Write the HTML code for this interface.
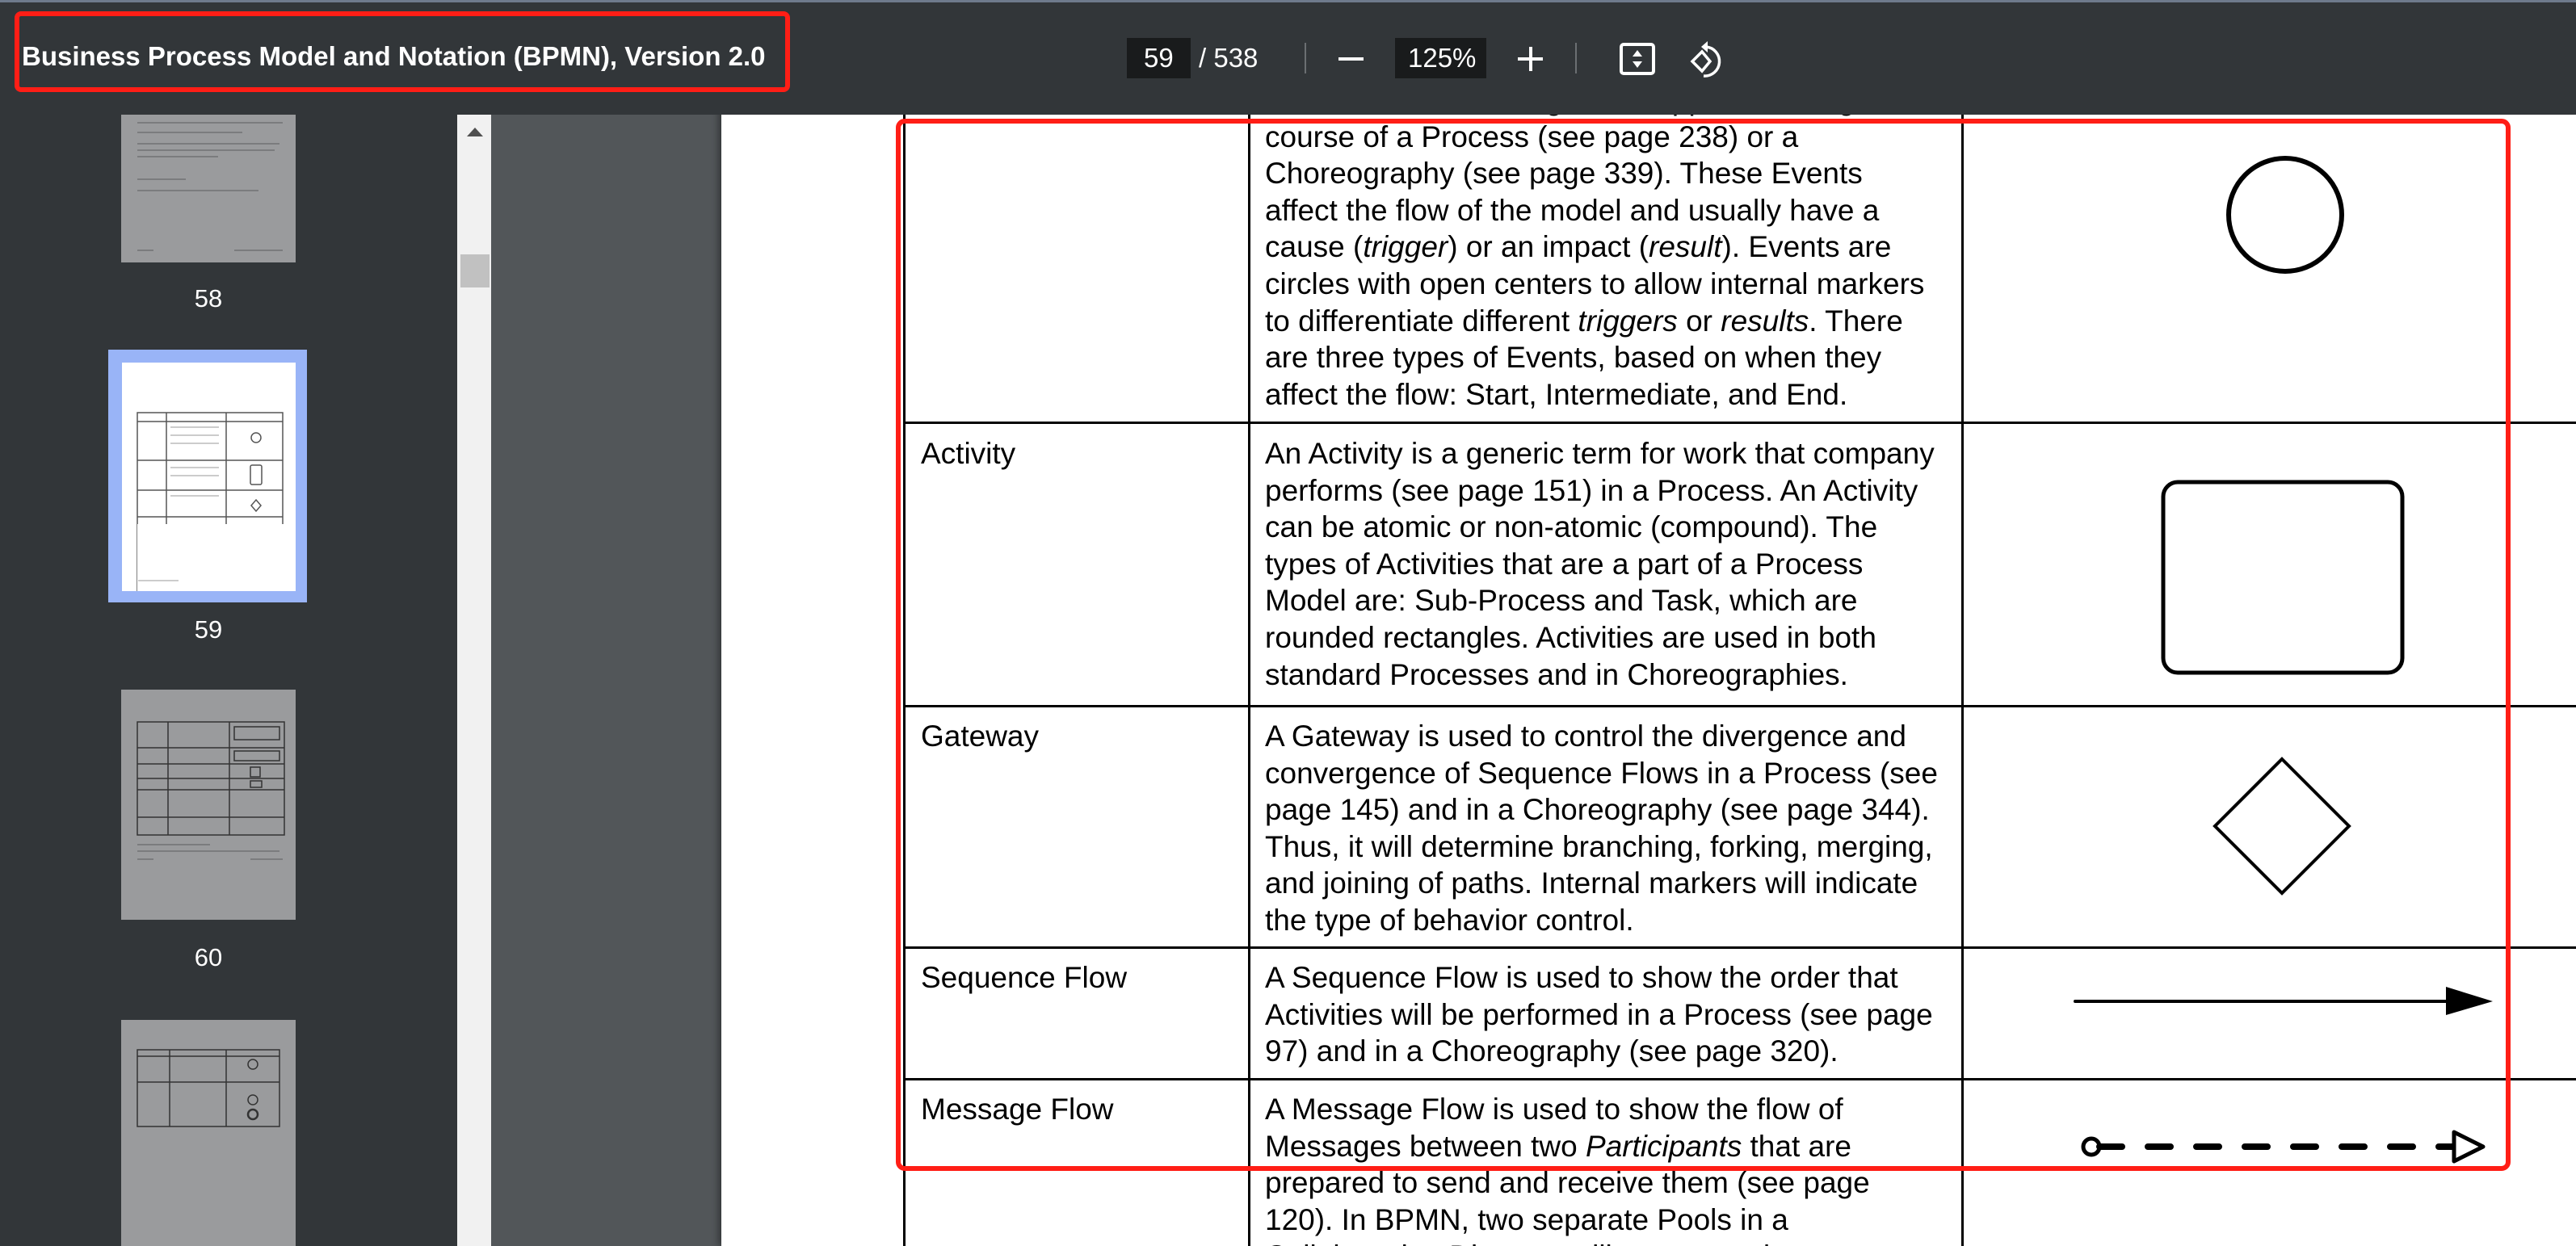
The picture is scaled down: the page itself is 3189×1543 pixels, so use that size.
<!DOCTYPE html>
<html style="overflow:hidden;width:3189px;height:1543px"><head><meta charset="utf-8"><style>
*{margin:0;padding:0;box-sizing:border-box}
body{width:3189px;height:1543px;overflow:hidden;background:#525659;font-family:"Liberation Sans",Arial,sans-serif}
#wrap{position:relative;width:3189px;height:1543px;overflow:hidden}
.abs{position:absolute}
#tb{left:0;top:0;width:3189px;height:142px;background:#323639;z-index:10;border-top:3px solid #6e7a8c}
#tb .t{color:#fff;font-size:32px;white-space:nowrap}
#side{left:0;top:142px;width:566px;height:1401px;background:#323639}
.lbl{color:#fff;font-size:31px;width:216px;text-align:center;left:150px}
#page{left:893px;top:0;width:2296px;height:1543px;background:#fff;box-shadow:-4px 0 8px rgba(0,0,0,.35)}
.txt{font-size:37px;line-height:45.6px;color:#000;white-space:nowrap}
.hl{background:#000;height:3px;left:1119px;width:2070px}
.vl{background:#000;width:3px;top:0;height:1543px}
</style></head><body><div id="wrap">
<div id="side" class="abs"></div>
<div class="abs" style="left:150px;top:142px;width:216px;height:183px;background:#9a9b9d">
<svg width="216" height="183"><g stroke="#7b7c7e" stroke-width="2"><line x1="20" y1="10" x2="200" y2="10"/><line x1="20" y1="22" x2="150" y2="22"/><line x1="20" y1="36" x2="196" y2="36"/><line x1="20" y1="44" x2="190" y2="44"/><line x1="20" y1="52" x2="120" y2="52"/><line x1="20" y1="80" x2="80" y2="80"/><line x1="20" y1="94" x2="170" y2="94"/><line x1="20" y1="168" x2="40" y2="168"/><line x1="140" y1="168" x2="200" y2="168"/></g></svg></div>
<div class="abs lbl" style="top:352px">58</div>
<div class="abs" style="left:134px;top:433px;width:246px;height:313px;background:#99b4f7"></div>
<div class="abs" style="left:151px;top:449px;width:215px;height:283px;background:#fff">
<svg width="215" height="283"><g fill="none" stroke="#555" stroke-width="1.5"><rect x="19" y="62" width="180" height="273" /><line x1="55" y1="62" x2="55" y2="200"/><line x1="129" y1="62" x2="129" y2="200"/><line x1="19" y1="73" x2="199" y2="73"/><line x1="19" y1="121" x2="199" y2="121"/><line x1="19" y1="158" x2="199" y2="158"/><line x1="19" y1="191" x2="199" y2="191"/><circle cx="166" cy="93" r="6"/><rect x="159" y="127" width="14" height="24" rx="2"/><path d="M166 170l6 7-6 7-6-7z"/><line x1="145" y1="203" x2="185" y2="203"/></g><rect x="19" y="200" width="181" height="84" fill="#fff"/><g stroke="#bbb" stroke-width="1.5"><line x1="60" y1="80" x2="120" y2="80"/><line x1="60" y1="90" x2="120" y2="90"/><line x1="60" y1="100" x2="120" y2="100"/><line x1="60" y1="130" x2="120" y2="130"/><line x1="60" y1="140" x2="120" y2="140"/><line x1="60" y1="165" x2="120" y2="165"/><line x1="20" y1="270" x2="70" y2="270"/></g></svg></div>
<div class="abs lbl" style="top:762px">59</div>
<div class="abs" style="left:150px;top:854px;width:216px;height:285px;background:#9a9b9d">
<svg width="216" height="285"><g fill="none" stroke="#333" stroke-width="1.5"><rect x="20" y="40" width="182" height="140"/><line x1="58" y1="40" x2="58" y2="180"/><line x1="134" y1="40" x2="134" y2="180"/><line x1="20" y1="72" x2="202" y2="72"/><line x1="20" y1="92" x2="202" y2="92"/><line x1="20" y1="110" x2="202" y2="110"/><line x1="20" y1="124" x2="202" y2="124"/><line x1="20" y1="158" x2="202" y2="158"/><rect x="140" y="46" width="56" height="16"/><rect x="140" y="76" width="56" height="12"/><rect x="160" y="96" width="12" height="12"/><rect x="160" y="113" width="14" height="8"/></g><g stroke="#7b7c7e" stroke-width="2"><line x1="20" y1="192" x2="110" y2="192"/><line x1="20" y1="200" x2="196" y2="200"/><line x1="20" y1="210" x2="40" y2="210"/><line x1="160" y1="210" x2="200" y2="210"/></g></svg></div>
<div class="abs lbl" style="top:1168px">60</div>
<div class="abs" style="left:150px;top:1263px;width:216px;height:280px;background:#9a9b9d">
<svg width="216" height="280"><g fill="none" stroke="#333" stroke-width="1.5"><rect x="20" y="37" width="176" height="95"/><line x1="60" y1="37" x2="60" y2="132"/><line x1="130" y1="37" x2="130" y2="132"/><line x1="20" y1="45" x2="196" y2="45"/><line x1="20" y1="77" x2="196" y2="77"/><circle cx="163" cy="55" r="6"/><circle cx="163" cy="99" r="6"/><circle cx="163" cy="117" r="6" stroke-width="2.5"/></g></svg></div>
<div class="abs" style="left:566px;top:142px;width:42px;height:1401px;background:#f1f1f1"></div>
<div class="abs" style="left:570px;top:315px;width:36px;height:41px;background:#c1c1c1"></div>
<svg class="abs" style="left:574px;top:155px" width="28" height="16"><path d="M4 14L14 3L24 14Z" fill="#505050"/></svg>
<div id="page" class="abs"></div>
<div class="abs vl" style="left:1118px"></div>
<div class="abs vl" style="left:1545px"></div>
<div class="abs vl" style="left:2428px"></div>
<div class="abs hl" style="top:522px"></div>
<div class="abs hl" style="top:873px"></div>
<div class="abs hl" style="top:1172px"></div>
<div class="abs hl" style="top:1335px"></div>
<div class="abs txt" style="left:1566px;top:101px">An Event is something that “happens” during the<br>course of a Process (see page 238) or a<br>Choreography (see page 339). These Events<br>affect the flow of the model and usually have a<br>cause (<i>trigger</i>) or an impact (<i>result</i>). Events are<br>circles with open centers to allow internal markers<br>to differentiate different <i>triggers</i> or <i>results</i>. There<br>are three types of Events, based on when they<br>affect the flow: Start, Intermediate, and End.</div>
<div class="abs txt" style="left:1140px;top:539px">Activity</div>
<div class="abs txt" style="left:1566px;top:539px">An Activity is a generic term for work that company<br>performs (see page 151) in a Process. An Activity<br>can be atomic or non-atomic (compound). The<br>types of Activities that are a part of a Process<br>Model are: Sub-Process and Task, which are<br>rounded rectangles. Activities are used in both<br>standard Processes and in Choreographies.</div>
<div class="abs txt" style="left:1140px;top:889px">Gateway</div>
<div class="abs txt" style="left:1566px;top:889px">A Gateway is used to control the divergence and<br>convergence of Sequence Flows in a Process (see<br>page 145) and in a Choreography (see page 344).<br>Thus, it will determine branching, forking, merging,<br>and joining of paths. Internal markers will indicate<br>the type of behavior control.</div>
<div class="abs txt" style="left:1140px;top:1188px">Sequence Flow</div>
<div class="abs txt" style="left:1566px;top:1188px">A Sequence Flow is used to show the order that<br>Activities will be performed in a Process (see page<br>97) and in a Choreography (see page 320).</div>
<div class="abs txt" style="left:1140px;top:1351px">Message Flow</div>
<div class="abs txt" style="left:1566px;top:1351px">A Message Flow is used to show the flow of<br>Messages between two <i>Participants</i> that are<br>prepared to send and receive them (see page<br>120). In BPMN, two separate Pools in a<br>Collaboration Diagram will represent the two</div>
<svg class="abs" style="left:0;top:0" width="3189" height="1543">
<circle cx="2829" cy="266" r="70" fill="none" stroke="#000" stroke-width="6"/>
<rect x="2678" y="597" width="296" height="236" rx="18" fill="none" stroke="#000" stroke-width="5"/>
<path d="M2825 940L2908 1023L2825 1106L2742 1023Z" fill="none" stroke="#000" stroke-width="4"/>
<line x1="2569" y1="1240" x2="3030" y2="1240" stroke="#000" stroke-width="4" stroke-linecap="round"/>
<path d="M3028 1222L3086 1240L3028 1257Z" fill="#000"/>
<ellipse cx="2589" cy="1420" rx="10" ry="10" fill="none" stroke="#000" stroke-width="5"/>
<line x1="2599" y1="1420" x2="3038" y2="1420" stroke="#000" stroke-width="8" stroke-dasharray="28 32" stroke-linecap="round"/>
<path d="M3038 1402L3074 1420L3038 1438Z" fill="#fff" stroke="#000" stroke-width="5" stroke-linejoin="round"/>
<rect x="1112" y="150" width="1993" height="1297" rx="8" fill="none" stroke="#ff1e16" stroke-width="6"/>
</svg>
<div id="tb" class="abs">
<div class="abs t" style="left:27px;top:48px;font-weight:bold;font-size:33px">Business Process Model and Notation (BPMN), Version 2.0</div>
<div class="abs" style="left:18px;top:11px;width:960px;height:100px;border:6px solid #ff1e16;border-radius:8px"></div>
<div class="abs" style="left:1395px;top:44px;width:79px;height:50px;background:#191b1c"></div>
<div class="abs t" style="left:1416px;top:50px;font-size:33px">59</div>
<div class="abs t" style="left:1484px;top:50px;font-size:33px">/ 538</div>
<div class="abs" style="left:1615px;top:50px;width:2px;height:38px;background:#6b6f72"></div>
<div class="abs" style="left:1657px;top:68px;width:31px;height:4px;background:#fff"></div>
<div class="abs" style="left:1727px;top:44px;width:113px;height:50px;background:#191b1c"></div>
<div class="abs t" style="left:1743px;top:50px;font-size:33px">125%</div>
<div class="abs" style="left:1879px;top:68px;width:31px;height:4px;background:#fff"></div>
<div class="abs" style="left:1893px;top:55px;width:4px;height:30px;background:#fff"></div>
<div class="abs" style="left:1950px;top:50px;width:2px;height:38px;background:#6b6f72"></div>
<svg class="abs" style="left:2000px;top:46px" width="160" height="50">
<rect x="7" y="6" width="40" height="36" rx="3" fill="none" stroke="#fff" stroke-width="4"/>
<path d="M27 13l-6 8h12zM27 35l-6-8h12z" fill="#fff"/>
<path d="M107 15l-12 12 12 12 10-12z" fill="none" stroke="#fff" stroke-width="3.5"/>
<path d="M112 9a16 16 0 1 1-3 36" fill="none" stroke="#fff" stroke-width="3.5"/>
<path d="M114 2l-8 7 8 7z" fill="#fff"/>
</svg>
</div>
</div></body></html>
